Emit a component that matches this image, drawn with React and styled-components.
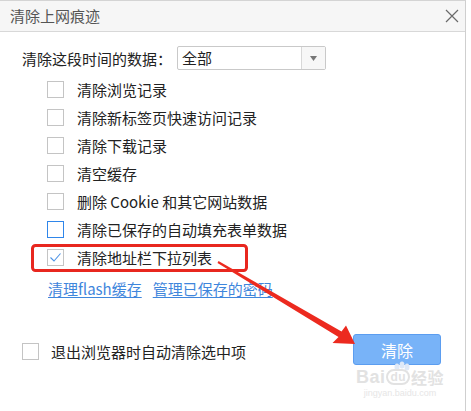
import React from "react";
import styled, { createGlobalStyle } from "styled-components";

const Global = createGlobalStyle`
  html, body { margin: 0; padding: 0; background: #fff; }
  body { font-family: "Noto Sans CJK SC", "Microsoft YaHei", sans-serif; }
`;

const Dialog = styled.div`
  position: relative;
  width: 465px;
  height: 410px;
  border-top: 1px solid #d4d4d4;
  border-right: 1px solid #cfcfcf;
  background: #fff;
  overflow: hidden;
`;

const TitleBar = styled.div`
  height: 30px;
  border-bottom: 1px solid #d8d8d8;
  background: #f6f6f6;
  display: flex;
  align-items: center;
  justify-content: space-between;
  padding: 0 5px 0 10px;
`;

const Title = styled.span`
  font-size: 15px;
  color: #555;
  line-height: 30px;
`;

const Body = styled.div`
  padding-left: 22px;
`;

const RangeRow = styled.div`
  margin-top: 14px;
  height: 24px;
  display: flex;
  align-items: center;
  gap: 5px;
`;

const Label = styled.span`
  font-size: 15px;
  color: #222;
  width: 150px;
`;

const Select = styled.div`
  width: 147px;
  height: 22px;
  border: 1px solid #c9c9c9;
  border-radius: 2px;
  display: flex;
  align-items: stretch;
  background: #fff;
`;

const SelectValue = styled.span`
  flex: 1;
  padding-left: 4px;
  font-size: 15px;
  line-height: 22px;
  color: #222;
`;

const SelectArrow = styled.span`
  width: 23px;
  border-left: 1px solid #d8d8d8;
  background: #f7f7f7;
  display: flex;
  align-items: center;
  justify-content: center;
`;

const CheckList = styled.div`
  margin-top: 5px;
  padding-left: 25px;
  display: flex;
  flex-direction: column;
`;

const CheckRow = styled.label`
  height: 28px;
  display: flex;
  align-items: center;
  gap: ${(p) => p.$gap || 13}px;
  font-size: 15px;
  color: #222;
`;

const Box = styled.span`
  box-sizing: border-box;
  width: 17px;
  height: 17px;
  border: 1px solid ${(p) => (p.$focus ? "#2f86ea" : "#c4c4c4")};
  background: #fff;
  display: flex;
  align-items: center;
  justify-content: center;
  flex-shrink: 0;
`;

const LinkRow = styled.div`
  margin-top: 7px;
  padding-left: 26px;
  height: 20px;
  display: flex;
  align-items: center;
  gap: 11px;
`;

const Link = styled.a`
  font-size: 15px;
  color: #3f86dc;
  text-decoration: underline;
  text-underline-offset: 2px;
  cursor: pointer;
`;

const Footer = styled.div`
  margin-top: 36px;
  padding: 0 24px 0 22px;
  height: 31px;
  display: flex;
  align-items: center;
  justify-content: space-between;
`;

const FooterCheck = styled(CheckRow)`
  margin-top: 3px;
`;

const Button = styled.button`
  width: 88px;
  height: 31px;
  background: #78b3f8;
  border: 1px solid #5b9df0;
  border-radius: 3px;
  color: #fff;
  font-family: inherit;
  font-size: 16px;
  padding: 0;
`;

const Watermark = styled.div`
  position: absolute;
  left: 355px;
  top: 366px;
  width: 90px;
  display: flex;
  flex-direction: column;
  align-items: center;
  color: #e2e2e2;
  pointer-events: none;
`;

const WmMain = styled.div`
  font-family: "Liberation Sans", Arial, sans-serif;
  font-weight: bold;
  font-size: 18px;
  line-height: 20px;
  letter-spacing: 0.5px;
  display: flex;
  align-items: center;
  gap: 1px;
`;

const WmDu = styled.span`
  font-size: 12px;
  border: 2px solid #e2e2e2;
  border-radius: 8px;
  padding: 0 2px;
  line-height: 12px;
`;

const WmCn = styled.span`
  font-family: "Noto Sans CJK SC", sans-serif;
  font-size: 16px;
  font-weight: bold;
`;

const WmUrl = styled.div`
  font-family: "Liberation Sans", Arial, sans-serif;
  font-size: 9px;
  line-height: 12px;
  color: #e6e6e6;
`;

const Overlay = styled.svg`
  position: absolute;
  left: 0;
  top: -1px;
  pointer-events: none;
`;

const Paw = styled.svg`
  position: absolute;
  left: 393px;
  top: 360px;
  pointer-events: none;
`;

const items = [
  { t: "清除浏览记录" },
  { t: "清除新标签页快速访问记录" },
  { t: "清除下载记录" },
  { t: "清空缓存" },
  { t: "删除 Cookie 和其它网站数据" },
  { t: "清除已保存的自动填充表单数据", focus: true },
  { t: "清除地址栏下拉列表", checked: true },
];

const Check = () => (
  <svg width="13" height="11" viewBox="0 0 13 11">
    <path d="M1.5 5.5 L5 9 L11.5 1.5" fill="none" stroke="#4d93e6" strokeWidth="1.1" />
  </svg>
);

export default function App() {
  return (
    <>
      <Global />
      <Dialog>
        <TitleBar>
          <Title>清除上网痕迹</Title>
          <svg width="14" height="14" viewBox="0 0 14 14" style={{ marginRight: 1 }}>
            <path d="M1 1 L13 13 M13 1 L1 13" stroke="#6a6a6a" strokeWidth="1.2" />
          </svg>
        </TitleBar>
        <Body>
          <RangeRow>
            <Label>清除这段时间的数据：</Label>
            <Select>
              <SelectValue>全部</SelectValue>
              <SelectArrow>
                <svg width="7" height="5" viewBox="0 0 7 5">
                  <path d="M0 0 L7 0 L3.5 5 Z" fill="#777" />
                </svg>
              </SelectArrow>
            </Select>
          </RangeRow>
          <CheckList>
            {items.map((it) => (
              <CheckRow key={it.t}>
                <Box $focus={it.focus}>{it.checked && <Check />}</Box>
                <span>{it.t}</span>
              </CheckRow>
            ))}
          </CheckList>
          <LinkRow>
            <Link>清理flash缓存</Link>
            <Link>管理已保存的密码</Link>
          </LinkRow>
        </Body>
        <Footer>
          <FooterCheck $gap={12}>
            <Box />
            <span>退出浏览器时自动清除选中项</span>
          </FooterCheck>
          <Button>清除</Button>
        </Footer>
        <Paw width="18" height="12" viewBox="0 0 18 12">
          <ellipse cx="4" cy="6" rx="2.5" ry="3.5" fill="#dfe9f7" />
          <ellipse cx="9" cy="4" rx="2.5" ry="3.5" fill="#dfe9f7" />
          <ellipse cx="14" cy="6" rx="2.5" ry="3.5" fill="#dfe9f7" />
        </Paw>
        <Watermark>
          <WmMain>
            <span>Bai</span>
            <WmDu>du</WmDu>
            <WmCn>经验</WmCn>
          </WmMain>
          <WmUrl>jingyan.baidu.com</WmUrl>
        </Watermark>
        <Overlay width="471" height="411" viewBox="0 0 471 411">
          <rect x="32.5" y="245.5" width="214" height="25" rx="3" fill="none" stroke="#e8271f" strokeWidth="3" />
          <polygon
            points="218.5,261.1 341.5,331.5 346,325.5 355,344 332.5,343 338.5,337 217.5,262.9"
            fill="#ec2a1f"
          />
        </Overlay>
      </Dialog>
    </>
  );
}
